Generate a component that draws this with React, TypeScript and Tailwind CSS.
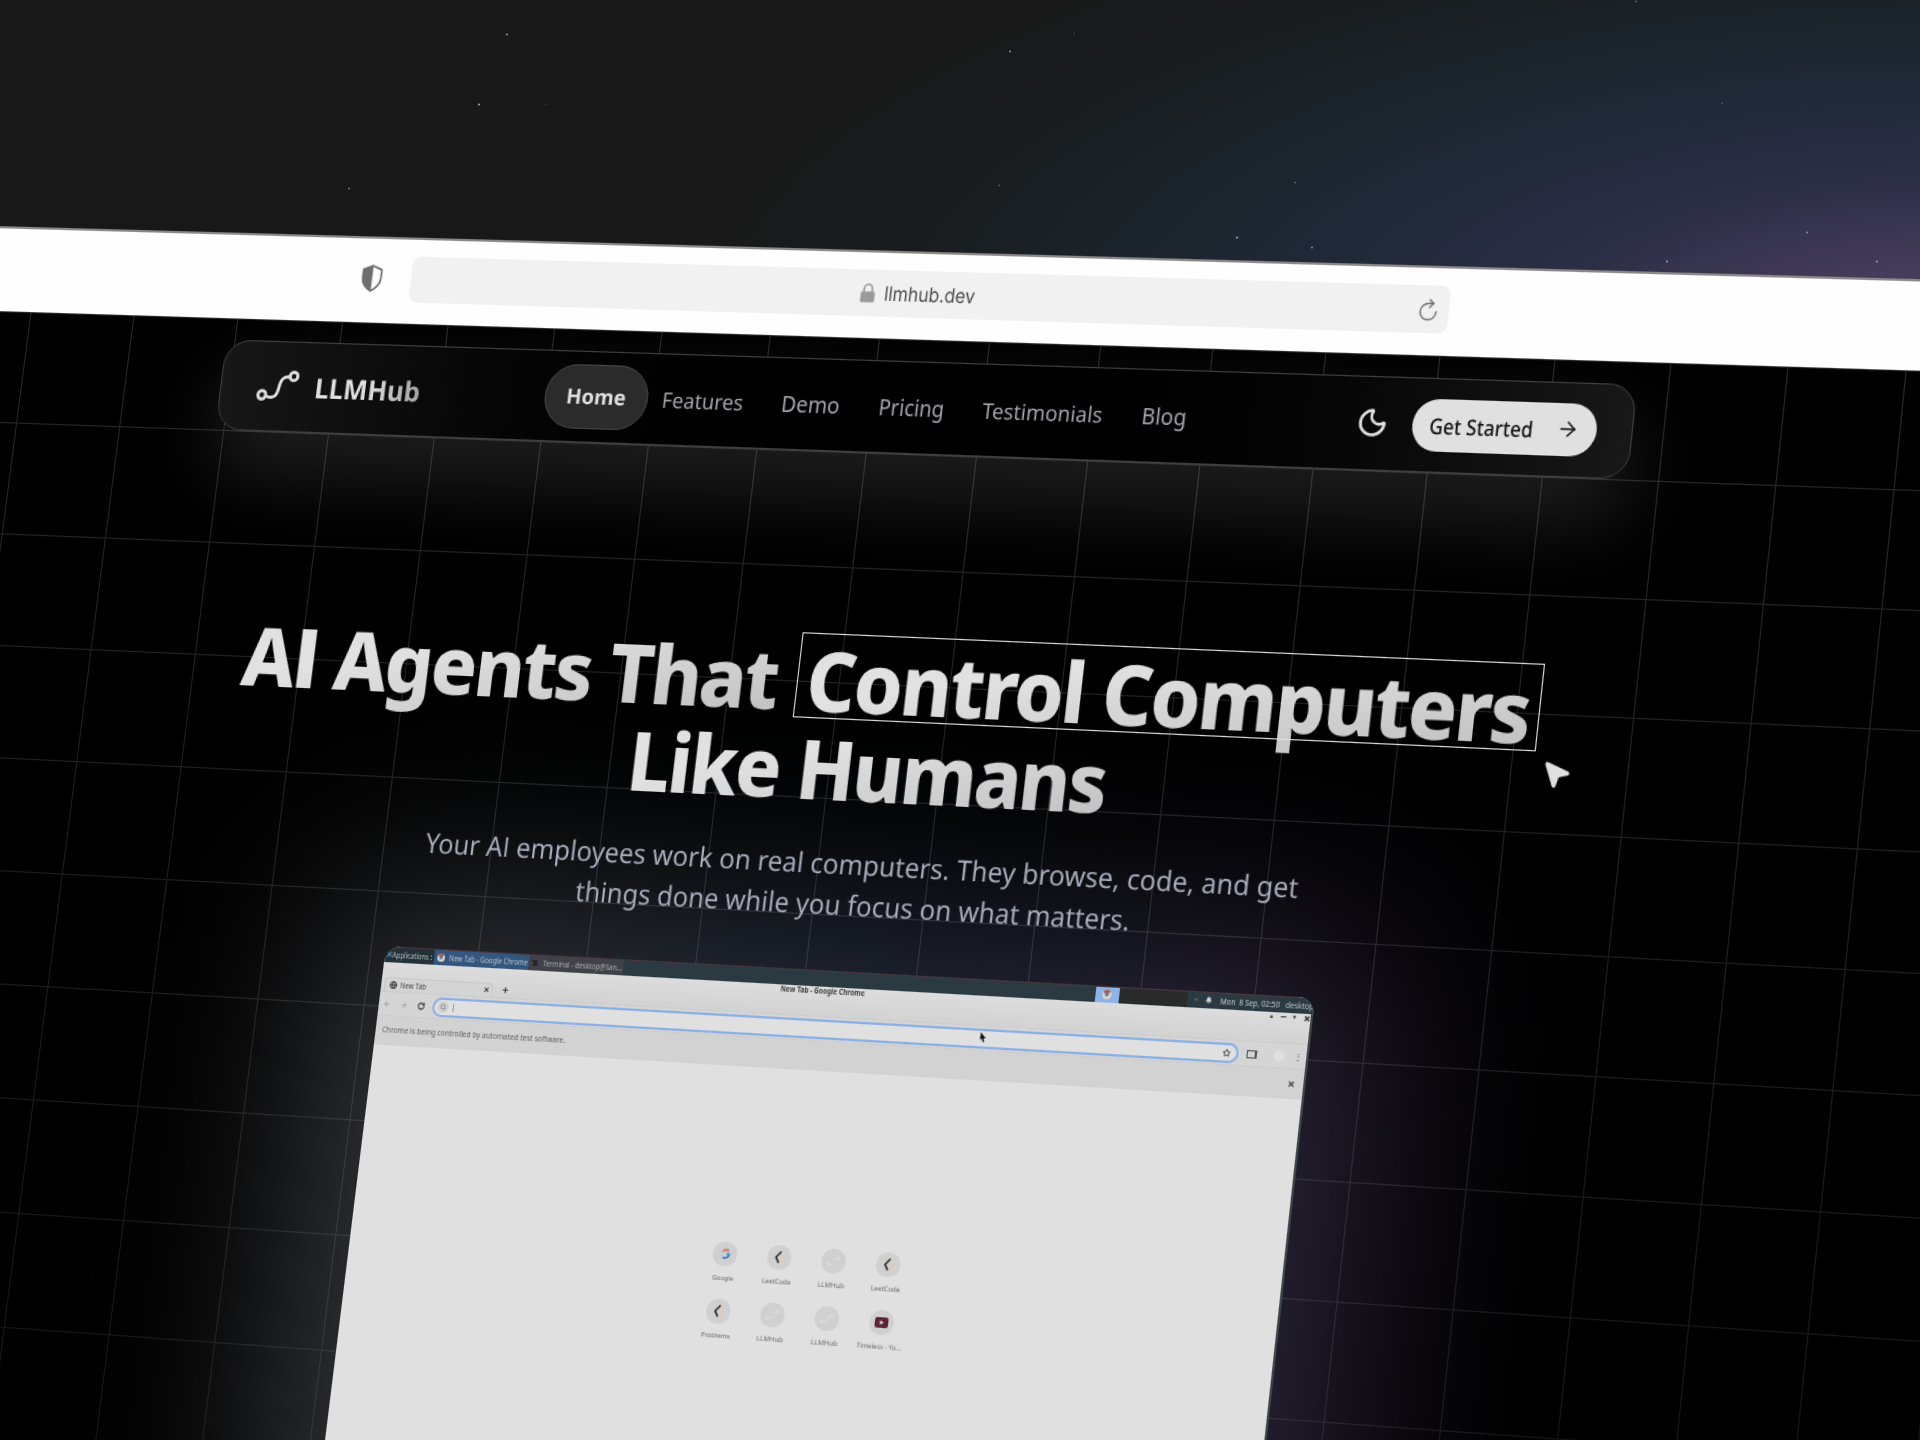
import { useLayoutEffect, useRef, useState } from "react";
import type { ReactNode } from "react";
import {
  ArrowLeft,
  ArrowRight,
  Bell,
  Globe,
  Moon,
  MousePointer2,
  Plus,
  RotateCw,
  Search,
  Star,
  X,
} from "lucide-react";

/** Keeps a single line of text exactly as wide as its box. */
function Fit({
  box,
  text,
  children,
}: {
  box: string;
  text?: string;
  children: ReactNode;
}) {
  const outer = useRef<HTMLSpanElement>(null);
  const inner = useRef<HTMLSpanElement>(null);
  const [scale, setScale] = useState(1);

  useLayoutEffect(() => {
    if (outer.current && inner.current && inner.current.offsetWidth > 0) {
      const target = parseFloat(getComputedStyle(outer.current).width);
      const natural = parseFloat(getComputedStyle(inner.current).width);
      setScale(target / natural);
    }
  }, []);

  return (
    <span ref={outer} className={`flex shrink-0 items-start ${box}`}>
      <span
        ref={inner}
        className={`block shrink-0 origin-left whitespace-nowrap ${text ?? ""}`}
        style={{ transform: `scaleX(${scale})` }}
      >
        {children}
      </span>
    </span>
  );
}

/** Capital I without slab serifs. */
function PlainI() {
  return <span className="font-['Open_Sans',sans-serif]">I</span>;
}

const stars = [
  { x: 507, y: 34, o: 0.5 },
  { x: 479, y: 104, o: 0.6 },
  { x: 349, y: 188, o: 0.35 },
  { x: 546, y: 104, o: 0.1 },
  { x: 1010, y: 51, o: 0.5 },
  { x: 1074, y: 33, o: 0.12 },
  { x: 1636, y: 1, o: 0.25 },
  { x: 999, y: 185, o: 0.2 },
  { x: 1295, y: 182, o: 0.25 },
  { x: 1237, y: 237, o: 0.55 },
  { x: 1312, y: 247, o: 0.4 },
  { x: 1722, y: 103, o: 0.2 },
  { x: 1807, y: 232, o: 0.4 },
  { x: 1667, y: 261, o: 0.45 },
  { x: 1877, y: 261, o: 0.45 },
];

function Stars() {
  return (
    <svg className="absolute inset-0 h-[300px] w-[1920px]" viewBox="0 0 1920 300">
      {stars.map((s) => (
        <circle key={`${s.x}-${s.y}`} cx={s.x} cy={s.y + 0.5} r="1.1" fill="#fff" opacity={s.o} />
      ))}
    </svg>
  );
}

function ShieldIcon() {
  return (
    <svg className="h-[25px] w-[20px]" viewBox="0 0 20 25" fill="none">
      <path
        d="M10 1.2 18.6 4.6V12c0 5.2-3.4 9-8.6 11.8C4.8 21 1.4 17.2 1.4 12V4.6Z"
        stroke="#6f6f6f"
        strokeWidth="1.7"
        strokeLinejoin="round"
      />
      <path d="M10.4 1.2 1.4 4.6V12c0 5.2 3.4 9 9 11.8Z" fill="#6f6f6f" />
    </svg>
  );
}

function LockIcon() {
  return (
    <svg className="h-[17px] w-[14px]" viewBox="0 0 14 17" fill="none">
      <path d="M3.3 8V5a3.7 4 0 0 1 7.4 0v3" stroke="#9a9a9a" strokeWidth="1.6" />
      <rect x="0.6" y="7.3" width="12.8" height="9.4" rx="1.5" fill="#9a9a9a" />
    </svg>
  );
}

function ReloadIcon() {
  return (
    <svg
      className="h-[20px] w-[16px]"
      viewBox="0 0 16 20"
      fill="none"
      stroke="#757575"
      strokeWidth="1.4"
      strokeLinecap="round"
      strokeLinejoin="round"
    >
      <path d="M15 11.5A7 7 0 1 1 8 4.5h4" />
      <path d="M8.8 1.2 12.3 4.5 8.8 8" />
    </svg>
  );
}

function BrowserBar() {
  return (
    <div className="flex h-[77px] shrink-0 items-start border-t-2 border-[#8b8888] bg-[#fefefe] pl-[413px] pt-[15px]">
      <div className="flex h-[41px] items-center pb-px">
        <ShieldIcon />
      </div>
      <div className="ml-[27px] flex h-[41px] w-[944px] items-center rounded-[8px] bg-[#f1f1f1]">
        <div className="ml-[418px] flex items-center">
          <LockIcon />
          <Fit
            box="ml-[8px] w-[82.5px]"
            text="font-['Inter','Liberation_Sans',sans-serif] text-[17.5px] leading-[24px] text-[#4b4b4b]"
          >
            llmhub.dev
          </Fit>
        </div>
        <div className="ml-auto mr-[10px]">
          <ReloadIcon />
        </div>
      </div>
    </div>
  );
}

function LogoMark({ className, stroke }: { className: string; stroke: string }) {
  return (
    <svg
      className={className}
      viewBox="0 0 40 28"
      fill="none"
      stroke={stroke}
      strokeWidth="2.9"
      strokeLinecap="round"
    >
      <circle cx="5.5" cy="22.5" r="3.7" />
      <circle cx="34" cy="5.2" r="3.7" />
      <path d="M9.2 23.5C21 27.5 20 18 21.5 12.5C22.8 6.5 25.5 5.5 30 5.8" />
    </svg>
  );
}

const navLinks = [
  { label: "Features", box: "w-[75px]" },
  { label: "Demo", box: "w-[53.5px]" },
  { label: "Pricing", box: "w-[59.5px]" },
  { label: "Testimonials", box: "w-[108px]" },
  { label: "Blog", box: "w-[40px]" },
];

function NavBar() {
  return (
    <header className="mt-[18.5px] flex h-[81px] w-[1282px] shrink-0 items-center rounded-[24px] border border-[#404040] bg-linear-to-r from-[#171717] via-black to-[#181818] pl-[34px] shadow-[0_34px_72px_rgba(255,255,255,0.135)]">
      <LogoMark className="h-[28px] w-[40px]" stroke="#dedede" />
      <Fit
        box="ml-[15px] w-[100px] mt-[2px]"
        text="bg-linear-to-r from-[#e0e0e0] from-50% to-[#a2a2a2] bg-clip-text text-[24.5px] font-bold leading-[32px] text-transparent"
      >
        LLMHub
      </Fit>
      <nav className="ml-[117px] flex items-center">
        <div className="flex h-[57px] w-[96px] items-center justify-center rounded-full border border-[#484848] bg-[#2b2b2b]">
          <Fit box="w-[55.5px]" text="text-[18.5px] font-bold leading-[28px] text-[#e0e0e0]">
            Home
          </Fit>
        </div>
        <div className="ml-[13px] flex items-center gap-[35px] pt-px">
          {navLinks.map((l) => (
            <Fit key={l.label} box={l.box} text="text-[19px] leading-[28px] text-[#a6a6ac]">
              {l.label}
            </Fit>
          ))}
        </div>
      </nav>
      <div className="ml-auto mr-[30px] flex items-center">
        <Moon className="size-[28px] text-[#dedede]" strokeWidth={2.2} />
        <div className="ml-[21px] flex h-[45px] w-[160px] items-center rounded-full bg-[#e0e0e0] pl-[15px] text-[#141414]">
          <Fit box="w-[90px] mt-px" text="text-[18.5px] font-medium leading-[28px]">
            Get Started
          </Fit>
          <ArrowRight className="ml-[20px] size-[20px]" strokeWidth={1.8} />
        </div>
      </div>
    </header>
  );
}

const headingText =
  "relative top-px bg-linear-to-br from-[#e1e1e1] from-30% to-[#b9b9b9] bg-clip-text text-[72px] font-extrabold leading-[76px] tracking-[-0.03em] text-transparent pb-[24px] -mb-[24px]";

function Hero() {
  return (
    <div className="mt-[159.5px] flex shrink-0 flex-col items-center">
      <h1 className="flex flex-col items-center">
        <span className="flex h-[76px]">
          <Fit box="w-[498px]" text={headingText}>
            A<PlainI /> Agents That
          </Fit>
          <span className="relative ml-[18px] flex pl-[9px] pr-[9px]">
            <Fit box="w-[640px]" text={headingText}>
              Control Computers
            </Fit>
            <span className="absolute inset-x-0 -top-[1.5px] bottom-[3px] border-[1.3px] border-[#dcdcdc]" />
            <MousePointer2 className="absolute -right-[33px] top-[78px] size-[27px] fill-[#e0e0e0] text-[#e0e0e0]" />
          </span>
        </span>
        <span className="flex h-[76px]">
          <Fit box="w-[432px]" text={headingText}>
            Like Humans
          </Fit>
        </span>
      </h1>
      <p className="mt-[27px] flex flex-col items-center text-[24px] leading-[35px] text-[#a8adbb]">
        <Fit box="w-[789px]">
          Your A<PlainI /> employees work on real computers. They browse, code, and get
        </Fit>
        <Fit box="w-[501px]">things done while you focus on what matters.</Fit>
      </p>
    </div>
  );
}

function ChromeMark({ className }: { className: string }) {
  return (
    <svg className={className} viewBox="0 0 10 10">
      <circle cx="5" cy="5" r="5" fill="#d8d8d0" />
      <path d="M5 5 .7 2.5A5 5 0 0 1 9.3 2.5Z" fill="#c0503f" />
      <path d="M5 5 9.3 2.5A5 5 0 0 1 5 10Z" fill="#e8d9b8" />
      <circle cx="5" cy="5" r="2.2" fill="#4a7fc9" />
    </svg>
  );
}

function LeetMark() {
  return (
    <svg className="h-[11px] w-[10px]" viewBox="0 0 10 11" fill="none" strokeLinecap="round">
      <path d="M6.5 3 8 5.5 6.5 9.5" stroke="#e6c9ae" strokeWidth="1.6" />
      <path d="M6 1 2.2 5.3 4.6 9.5" stroke="#333" strokeWidth="1.7" />
    </svg>
  );
}

function GoogleMark() {
  return (
    <svg className="size-[9px]" viewBox="0 0 10 10" fill="none" strokeWidth="2">
      <path d="M1.8 3A4 4 0 0 1 8 2.3" stroke="#d07a70" />
      <path d="M8.8 5A4 4 0 0 1 2.5 8" stroke="#3f7fd0" />
      <path d="M2.5 8A4 4 0 0 1 1.8 3" stroke="#c8cdd4" />
      <path d="M6 5h3" stroke="#4a86d6" />
    </svg>
  );
}

function PlayMark() {
  return (
    <svg className="h-[9px] w-[12px]" viewBox="0 0 12 9">
      <rect width="12" height="9" rx="2" fill="#5c2436" />
      <path d="M4.6 2.5v4L8 4.500Z" fill="#ddd" />
    </svg>
  );
}

const shortcuts = [
  { label: "Google", icon: "google", box: "w-[19px]" },
  { label: "LeetCode", icon: "leet", box: "w-[26px]" },
  { label: "LLMHub", icon: "hub", box: "w-[24px]" },
  { label: "LeetCode", icon: "leet", box: "w-[26px]" },
  { label: "Problems", icon: "leet", box: "w-[26px]" },
  { label: "LLMHub", icon: "hub", box: "w-[24px]" },
  { label: "LLMHub", icon: "hub", box: "w-[24px]" },
  { label: "Timeless - Yo...", icon: "play", box: "w-[40px]" },
];

function Shortcut({ label, icon, box }: { label: string; icon: string; box: string }) {
  return (
    <div className="flex h-[49px] flex-col items-center">
      <div className="flex size-[21.5px] items-center justify-center rounded-full bg-[#d0d0d0]">
        {icon === "google" && <GoogleMark />}
        {icon === "leet" && <LeetMark />}
        {icon === "hub" && <LogoMark className="h-[9px] w-[12px]" stroke="#dedede" />}
        {icon === "play" && <PlayMark />}
      </div>
      <Fit box={`mt-[5px] ${box}`} text="text-[6px] leading-[10px] text-[#686868]">
        {label}
      </Fit>
    </div>
  );
}

function Desktop() {
  return (
    <div className="relative mt-[39.5px] shrink-0">
      {/* colour halo behind the recording */}
      <div className="absolute -inset-x-[54px] -bottom-[50px] -top-[46px] -z-20 bg-linear-to-r from-[#38383a] via-[#232c3c] to-[#2e243a] blur-[88px]" />
      <div className="relative h-[525px] w-[839px] overflow-hidden rounded-[15px] bg-[#e0e0e0]">
        <div className="flex h-full flex-col blur-[0.6px]">
          <div className="flex h-[14px] shrink-0 items-center border-t border-[#4b363d] bg-[#2a3a40] text-[7.5px] leading-[12px] text-[#c4c9cc]">
            <div className="flex w-[46.5px] items-center bg-[#223037]">
              <span className="w-[6px] pl-[1px] text-[#5b93d6]">✕</span>
              <Fit box="ml-[1px] w-[34px]">Applications</Fit>
              <span className="ml-[2px]">:</span>
            </div>
            <div className="flex h-full w-[87.5px] items-center bg-[#33567f] pl-[3px]">
              <ChromeMark className="size-[7px]" />
              <Fit box="ml-[4px] w-[73px]">New Tab - Google Chrome</Fit>
            </div>
            <div className="flex h-full w-[87px] items-center bg-[#414249] pl-[3px] text-[#a9abb0]">
              <span className="size-[5px] bg-[#24262b] text-[4px] leading-[5px]">&gt;</span>
              <Fit box="ml-[5px] w-[73px]">Terminal - desktop@San...</Fit>
            </div>
            <div className="ml-auto flex h-full w-[21px] items-center justify-center bg-[#8db4ea]">
              <ChromeMark className="size-[8px]" />
            </div>
            <div className="h-full w-[60px] bg-[#282b2a]" />
            <div className="flex h-full w-[111px] items-center overflow-hidden pl-[6px]">
              <ArrowLeft className="size-[6px] text-[#7f8d93]" />
              <Bell className="ml-[6px] size-[8px] fill-[#d8d8d8] text-[#d8d8d8]" />
              <Fit box="ml-[7px] w-[52px]">Mon&nbsp; 8 Sep, 02:50</Fit>
              <Fit box="ml-[5px] w-[25px]">desktop</Fit>
            </div>
          </div>
          <div className="flex h-[25.5px] shrink-0 bg-linear-to-b from-[#dcdcdc] to-[#d3d3d3]">
            <div className="ml-[3px] mt-[13px] flex w-[101px] items-center rounded-t-[4px] border border-b-0 border-[#c9c9c9] bg-[#d4d4d4] pl-[4px]">
              <Globe className="size-[7px] text-[#444]" strokeWidth={3} />
              <Fit box="ml-[3px] w-[24px]" text="text-[6.5px] leading-[9px] text-[#444]">
                New Tab
              </Fit>
              <X className="ml-auto mr-[2px] size-[6px] text-[#333]" strokeWidth={4} />
            </div>
            <Plus className="ml-[8px] mt-[15px] size-[7px] text-[#444]" strokeWidth={4} />
            <Fit
              box="ml-[247px] -mt-[1px] w-[76px]"
              text="text-[7px] font-bold leading-[9px] text-[#3c3c3c]"
            >
              New Tab - Google Chrome
            </Fit>
            <div className="ml-auto mr-[2px] flex h-[8px] items-center gap-[5px] text-[5px] leading-none text-[#333]">
              <span>▲</span>
              <span className="h-px w-[5px] bg-[#444]" />
              <span>▼</span>
              <X className="size-[6px]" strokeWidth={5} />
            </div>
          </div>
          <div className="flex h-[22px] shrink-0 items-center border-y border-[#cdcdcd] bg-[#d5d5d5] pl-[4px]">
            <ArrowLeft className="size-[7px] text-[#a6a6a6]" strokeWidth={3} />
            <ArrowRight className="ml-[9px] size-[7px] text-[#a6a6a6]" strokeWidth={3} />
            <RotateCw className="ml-[9px] size-[7px] text-[#444]" strokeWidth={3.5} />
            <div className="ml-[7px] flex h-[17px] w-[728px] items-center rounded-full border-2 border-[#8bb0e6] bg-[#e0e0e0] pl-[3px]">
              <span className="flex size-[10px] items-center justify-center rounded-full bg-[#cfcfcf]">
                <Search className="size-[6px] text-[#888]" strokeWidth={3} />
              </span>
              <span className="ml-[4px] h-[7px] w-px bg-[#999]" />
              <Star className="ml-auto mr-[5px] size-[7px] text-[#555]" strokeWidth={3} />
            </div>
            <span className="ml-[7px] h-[7px] w-[9px] border border-r-2 border-[#555]" />
            <span className="ml-[15px] size-[9px] rounded-full bg-[#dfe1de]" />
            <span className="ml-[8px] text-[8px] leading-none text-[#444]">⋮</span>
          </div>
          <div className="flex h-[24.5px] shrink-0 items-center bg-[#d2d2d2] pl-[6px]">
            <Fit box="w-[170px]" text="text-[7px] leading-[10px] text-[#5e5e5e]">
              Chrome is being controlled by automated test software.
            </Fit>
            <X className="ml-auto mr-[9px] size-[7px] text-[#444]" strokeWidth={4} />
          </div>
          <div className="flex flex-1 justify-center bg-[#e0e0e0] pt-[150px]">
            <div className="mr-[3px] grid h-[98px] w-[196px] grid-cols-4">
              {shortcuts.map((s, i) => (
                <Shortcut key={i} {...s} />
              ))}
            </div>
          </div>
        </div>
        <svg className="absolute left-[549px] top-[45px] h-[9px] w-[6px]" viewBox="0 0 6 9">
          <path d="M.5 0v6.5L2 5.5 3.2 8.5 4.5 8 3.4 5H5.5Z" fill="#111" />
        </svg>
        <div className="absolute bottom-0 right-0 top-[14px] w-[1.5px] bg-[#3c4846]" />
      </div>
    </div>
  );
}

export default function App() {
  return (
    <div className="relative h-[1440px] w-[1920px] overflow-hidden bg-[#181818] bg-[radial-gradient(1250px_460px_at_1960px_330px,#4e3f66_0%,#453b5a_14%,#2b2e45_34%,#1f2836_54%,#1b2329_72%,#191c1e_86%,rgba(24,24,24,0)_104%)] font-['Noto_Sans','Open_Sans',sans-serif]">
      <Stars />
      <div className="relative flex h-[1130px] w-[2000px] origin-top-left flex-col outline outline-transparent [transform:matrix3d(1.018945,0.018863,0,-0.000040996,-0.142835,1.091617,0,-0.000016305,0,0,1,0,-60.558,224.432,0,1)]">
        <BrowserBar />
        <main className="relative isolate flex flex-1 flex-col items-center overflow-hidden bg-black pr-[134px]">
          <div className="absolute inset-0 -z-10 bg-[linear-gradient(to_right,#fff_1px,transparent_1px),linear-gradient(to_bottom,#fff_1px,transparent_1px)] bg-size-[100px_100px] opacity-[0.16] [mask-image:linear-gradient(to_bottom,#000,rgba(0,0,0,0.5))]" />
          <NavBar />
          <Hero />
          <Desktop />
        </main>
      </div>
    </div>
  );
}
